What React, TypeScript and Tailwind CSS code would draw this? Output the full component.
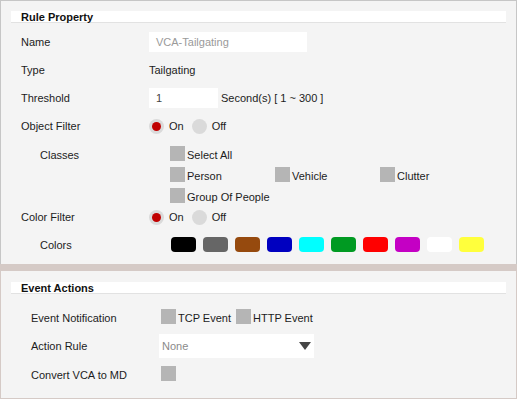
import React from "react";

const SWATCHES = [
  "bg-[#000000]",
  "bg-[#666666]",
  "bg-[#964a0e]",
  "bg-[#0000c0]",
  "bg-[#00ffff]",
  "bg-[#009a22]",
  "bg-[#ff0000]",
  "bg-[#c400c4]",
  "bg-[#ffffff]",
  "bg-[#ffff3c]",
];

function SectionTitle({ children }: { children: React.ReactNode }) {
  return (
    <div className="h-[12px] bg-white border-b border-[#e2e2e2] pl-[10px] text-[11px] leading-[12px] font-bold text-[#111]">
      {children}
    </div>
  );
}

function Row({ label, indent = false, children }: { label: string; indent?: boolean; children?: React.ReactNode }) {
  return (
    <div className="flex h-[28px] items-center">
      <div className={`w-[138px] shrink-0 ${indent ? "pl-[29px]" : "pl-[10px]"}`}>{label}</div>
      <div className="flex items-center">{children}</div>
    </div>
  );
}

function Radio({ checked, label }: { checked?: boolean; label: string }) {
  return (
    <div className="flex items-center mr-[8px]">
      <span className="w-[15px] h-[15px] rounded-full bg-[#dadada] flex items-center justify-center">
        {checked && <span className="w-[9px] h-[9px] rounded-full bg-[#c00000]" />}
      </span>
      <span className="ml-[5px]">{label}</span>
    </div>
  );
}

function Check({ label, className = "" }: { label: string; className?: string }) {
  return (
    <div className={`flex items-end ${className}`}>
      <span className="w-[15px] h-[15px] bg-[#b5b5b5] shrink-0" />
      <span className="ml-[2px] leading-[12px]">{label}</span>
    </div>
  );
}

export default function App() {
  return (
    <div className="w-[517px] h-[399px] overflow-hidden text-[11px] text-[#1c1c1c] bg-[#f4f4f4] [font-family:'Liberation_Sans',Arial,sans-serif]">
      {/* Rule Property */}
      <div className="h-[264px] border-t border-x border-[#c6c6c6] bg-[#f4f4f4] pt-[10px] px-[10px]">
        <SectionTitle>Rule Property</SectionTitle>
        <div className="pt-[5px]">
          <Row label="Name">
            <div className="w-[158px] h-[20px] bg-white pl-[7px] flex items-center text-[#9a9a9a]">VCA-Tailgating</div>
          </Row>
          <Row label="Type">Tailgating</Row>
          <Row label="Threshold">
            <div className="w-[69px] h-[20px] bg-white pl-[7px] flex items-center text-[#444]">1</div>
            <span className="ml-[3px]">Second(s) [ 1 ~ 300 ]</span>
          </Row>
          <Row label="Object Filter">
            <Radio checked label="On" />
            <Radio label="Off" />
          </Row>
          <div className="flex h-[63px]">
            <div className="w-[138px] shrink-0 pl-[29px] pt-[7px]">Classes</div>
            <div className="pl-[21px] pt-[6px] flex flex-col gap-[6px]">
              <Check label="Select All" />
              <div className="flex">
                <Check label="Person" className="w-[105px]" />
                <Check label="Vehicle" className="w-[105px]" />
                <Check label="Clutter" />
              </div>
              <Check label="Group Of People" />
            </div>
          </div>
          <Row label="Color Filter">
            <Radio checked label="On" />
            <Radio label="Off" />
          </Row>
          <Row label="Colors" indent>
            <div className="flex gap-[7px] pl-[22px] mb-[2px]">
              {SWATCHES.map((c) => (
                <span key={c} className={`w-[25px] h-[15px] rounded-[4px] ${c}`} />
              ))}
            </div>
          </Row>
        </div>
      </div>

      <div className="h-[7px] bg-[#d5cac6]" />

      {/* Event Actions */}
      <div className="h-[128px] border-x border-b border-[#d5cac6] bg-[#f4f4f4] pt-[11px] px-[10px]">
        <SectionTitle>Event Actions</SectionTitle>
        <div className="pt-[10px] pl-[20px]">
          <div className="flex h-[28px] items-center">
            <div className="w-[130px] shrink-0">Event Notification</div>
            <div className="flex items-center -mt-[3px]">
              <Check label="TCP Event" />
              <Check label="HTTP Event" className="ml-[5px]" />
            </div>
          </div>
          <div className="flex h-[28px] items-center">
            <div className="w-[128px] shrink-0">Action Rule</div>
            <div className="w-[155px] h-[24px] bg-white pl-[3px] pr-[2px] flex items-center justify-between text-[#8a8a8a]">
              <span>None</span>
              <svg width="12" height="8" viewBox="0 0 12 8" className="mr-[1px]">
                <path d="M0 0H12L6 8Z" fill="#454545" />
              </svg>
            </div>
          </div>
          <div className="flex h-[28px] items-center">
            <div className="w-[130px] shrink-0 pt-[3px]">Convert VCA to MD</div>
            <span className="w-[15px] h-[15px] bg-[#b5b5b5] -mt-[1px]" />
          </div>
        </div>
      </div>
    </div>
  );
}
